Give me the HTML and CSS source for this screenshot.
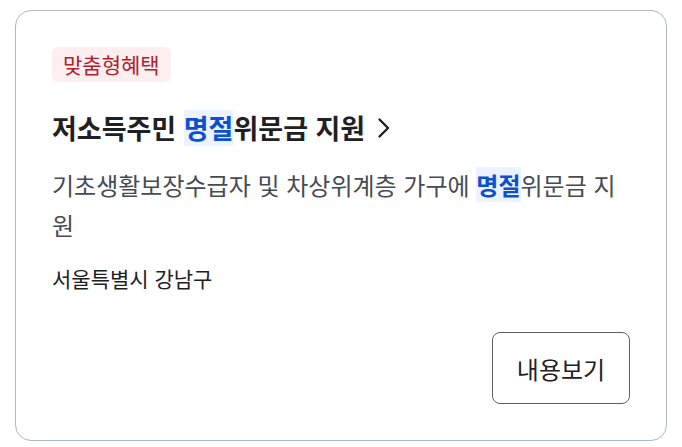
FILE: index.html
```html
<!DOCTYPE html>
<html lang="ko">
<head>
<meta charset="utf-8">
<link rel="stylesheet" href="styles.css">
</head>
<body>
<div class="card">
  <span class="tag">맞춤형혜택</span>
  <a class="title" href="#">저소득주민 <mark class="hl">명절</mark>위문금 지원 <svg class="chev" width="16" height="22" viewBox="0 0 16 22"><path d="M3.5 2.5 L12 11 L3.5 19.5" fill="none" stroke="#1e2124" stroke-width="2.4" stroke-linecap="round" stroke-linejoin="round"/></svg></a>
  <p class="desc">기초생활보장수급자 및 차상위계층 가구에 <mark class="hl strong">명절</mark>위문금 지원</p>
  <p class="loc">서울특별시 강남구</p>
  <div class="actions"><button class="btn">내용보기</button></div>
</div>
</body>
</html>
```

FILE: styles.css
```css
html, body { margin: 0; padding: 0; background: #fff; }
body {
  padding: 10px 15px 6px 15px;
  font-family: "Noto Sans CJK KR", "Noto Sans", sans-serif;
  color: #1e2124;
}
.card {
  border: 1px solid #b1b8be;
  border-radius: 16px;
  padding: 36px 36px 36px 36px;
  display: flex;
  flex-direction: column;
  align-items: flex-start;
  box-sizing: border-box;
  height: 431px;
}
.tag {
  background: #fdefef;
  color: #b0202e;
  font-size: 21px;
  line-height: 35px;
  padding: 0 11px;
  border-radius: 6px;
}
.title {
  margin-top: 28px;
  font-size: 27px;
  font-weight: 700;
  color: #1e2124;
  text-decoration: none;
  line-height: 36px;
  display: flex;
  align-items: center;
  white-space: pre;
}
.hl {
  background: #ecf2fe;
  color: #0b50d0;
}
.strong { font-weight: 700; }
.chev { margin-left: 3px; }
.desc {
  margin: 19px 0 0 0;
  font-size: 24px;
  line-height: 40px;
  color: #464c53;
}
.loc {
  margin: 18px 0 0 0;
  font-size: 21px;
  line-height: 30px;
  color: #1e2124;
}
.actions {
  margin-top: auto;
  align-self: stretch;
  display: flex;
  justify-content: flex-end;
}
.btn {
  font-family: "Noto Sans CJK KR", sans-serif;
  font-size: 24px;
  color: #1e2124;
  background: #fff;
  border: 1px solid #58616a;
  border-radius: 8px;
  width: 138px;
  height: 72px;
  padding: 0;
}
```
